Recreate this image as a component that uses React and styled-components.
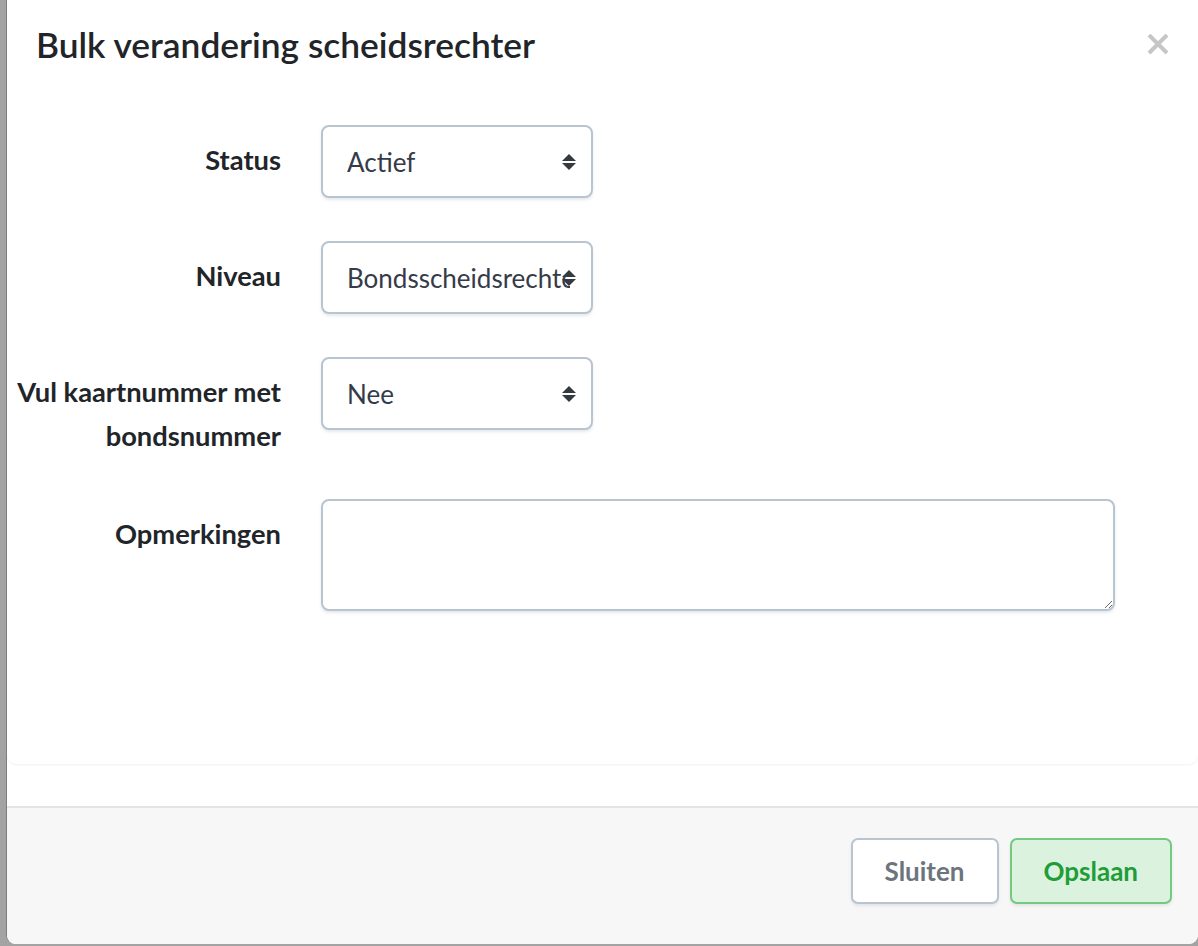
import React from 'react';
import styled, { createGlobalStyle } from 'styled-components';

const GlobalStyle = createGlobalStyle`
  html, body {
    margin: 0;
    padding: 0;
  }
  body {
    background: #a3a3a3;
    font-family: Lato, "Noto Sans", sans-serif;
    color: #212529;
  }
  * {
    box-sizing: border-box;
  }
`;

const Backdrop = styled.div`
  width: 1198px;
  height: 946px;
  padding: 0 0 2px 6px;
  display: flex;
  overflow: hidden;
`;

const Modal = styled.div`
  flex: 1;
  display: flex;
  flex-direction: column;
  background: #fff;
  border-left: 1px solid #7d7d7d;
  border-radius: 0 0 9px 9px;
  overflow: hidden;
`;

const Header = styled.div`
  height: 88px;
  display: flex;
  align-items: center;
  justify-content: space-between;
  padding: 0 28px 0 29px;
`;

const Title = styled.h5`
  margin: 0;
  font-size: 35.3px;
  font-weight: 600;
  color: #212529;
`;

const CloseButton = styled.button`
  border: 0;
  background: transparent;
  padding: 0;
  width: 24px;
  height: 22px;
  cursor: pointer;
  display: flex;
  margin-top: 2px;
`;

const Body = styled.div`
  height: 676px;
  padding-top: 37px;
  border-radius: 0 0 9px 9px;
  box-shadow: 0 1px 2px rgba(0, 0, 0, 0.06);
`;

const Row = styled.div`
  display: grid;
  grid-template-columns: 274px 1fr;
  column-gap: 40px;
  margin-bottom: 28.8px;
`;

const Label = styled.label`
  text-align: right;
  font-size: 27.3px;
  font-weight: 700;
  line-height: 44px;
  padding: 12.6px 0;
  color: #212529;
`;

const SelectWrap = styled.div`
  position: relative;
  width: 272px;
  height: 73px;
  margin-bottom: 14.4px;
`;

const Select = styled.select`
  appearance: none;
  -webkit-appearance: none;
  width: 100%;
  height: 100%;
  border: 2px solid #b9c4d1;
  border-radius: 8px;
  background: #fff;
  box-shadow: 0 2px 3px rgba(60, 70, 90, 0.12);
  padding: 0 21px 0 24px;
  font-family: inherit;
  font-size: 26px;
  color: #353b48;
  outline: none;
`;

const Caret = styled.svg`
  position: absolute;
  right: 16px;
  top: 28px;
  pointer-events: none;
`;

const TextArea = styled.textarea`
  width: 794px;
  height: 112px;
  border: 2px solid #b9c4d1;
  border-radius: 8px;
  box-shadow: 0 2px 3px rgba(60, 70, 90, 0.12);
  font-family: inherit;
  font-size: 26px;
  color: #353b48;
  padding: 12px 22px;
  outline: none;
`;

const Spacer = styled.div`
  height: 42px;
`;

const Footer = styled.div`
  flex: 1;
  background: #f7f7f7;
  border-top: 2px solid #e4e4e4;
  display: flex;
  justify-content: flex-end;
  align-items: flex-start;
  gap: 11px;
  padding: 30px 26px 0 0;
`;

const Button = styled.button`
  height: 66px;
  padding: 0 32px;
  border-radius: 7px;
  font-family: inherit;
  font-size: 26px;
  font-weight: 700;
  cursor: pointer;
  border: 2px solid ${(p) => (p.$primary ? '#74c980' : '#b9c4d1')};
  background: ${(p) => (p.$primary ? '#dbf2de' : '#fff')};
  color: ${(p) => (p.$primary ? '#1f9d38' : '#6c757d')};
  box-shadow: 0 2px 3px rgba(60, 70, 90, 0.1);
`;

function CaretIcon() {
  return (
    <Caret width="16" height="18" viewBox="0 0 16 18">
      <path d="M8 1 L15 8 H1 Z" fill="#343a40" />
      <path d="M8 17 L15 10 H1 Z" fill="#343a40" />
    </Caret>
  );
}

function SelectField({ label, value, options }) {
  return (
    <Row>
      <Label>{label}</Label>
      <div>
        <SelectWrap>
          <Select defaultValue={value}>
            {options.map((o) => (
              <option key={o}>{o}</option>
            ))}
          </Select>
          <CaretIcon />
        </SelectWrap>
      </div>
    </Row>
  );
}

export default function App() {
  return (
    <>
      <GlobalStyle />
      <Backdrop>
        <Modal>
          <Header>
            <Title>Bulk verandering scheidsrechter</Title>
            <CloseButton aria-label="Sluiten">
              <svg width="24" height="22" viewBox="0 0 24 22">
                <path d="M3 1 L21 19 M21 1 L3 19" stroke="#c6c6c6" strokeWidth="4" />
              </svg>
            </CloseButton>
          </Header>
          <Body>
            <SelectField label="Status" value="Actief" options={['Actief', 'Inactief']} />
            <SelectField
              label="Niveau"
              value="Bondsscheidsrechter"
              options={['Bondsscheidsrechter', 'Verenigingsscheidsrechter']}
            />
            <SelectField
              label="Vul kaartnummer met bondsnummer"
              value="Nee"
              options={['Nee', 'Ja']}
            />
            <Row>
              <Label>Opmerkingen</Label>
              <div>
                <TextArea />
              </div>
            </Row>
          </Body>
          <Spacer />
          <Footer>
            <Button>Sluiten</Button>
            <Button $primary>Opslaan</Button>
          </Footer>
        </Modal>
      </Backdrop>
    </>
  );
}
